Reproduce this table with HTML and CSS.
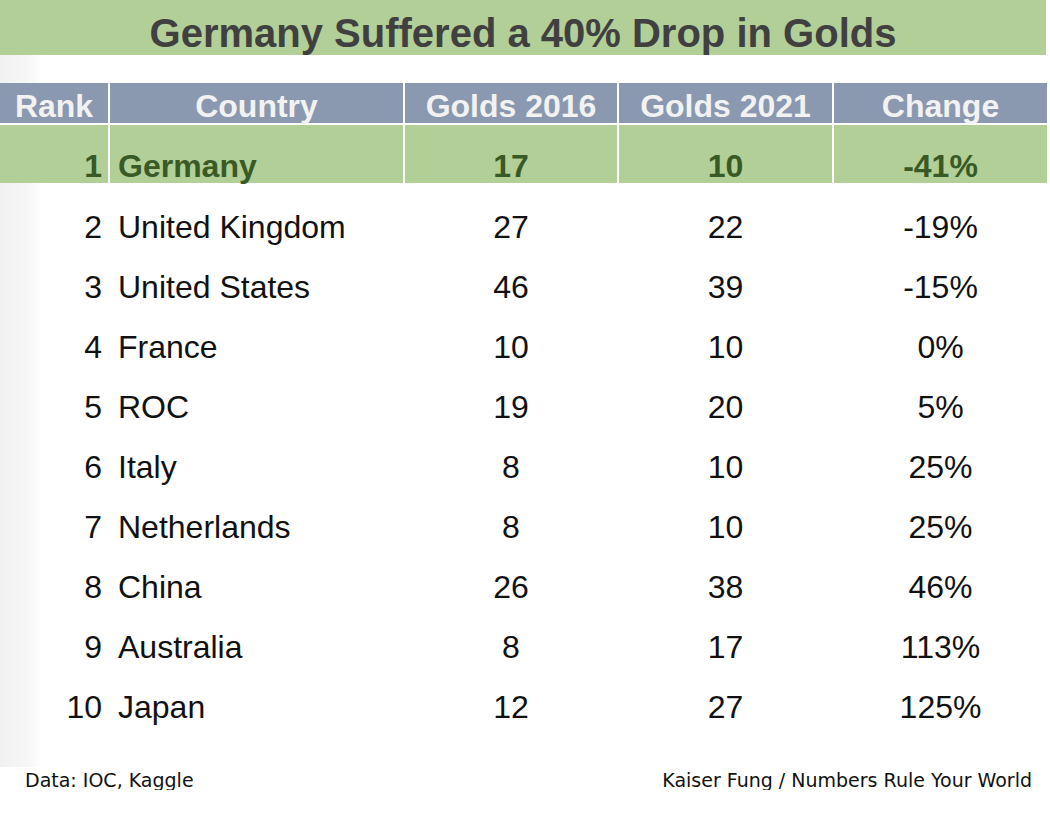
FILE: index.html
```
<!DOCTYPE html>
<html lang="en">
<head>
<meta charset="utf-8">
<title>Germany Suffered a 40% Drop in Golds</title>
<link rel="stylesheet" href="styles.css">
</head>
<body>
<div class="title">Germany Suffered a 40% Drop in Golds</div>
<div class="board">
  <table class="medals">
    <colgroup>
      <col class="c-rank"><col class="c-country"><col class="c-g16"><col class="c-g21"><col class="c-chg">
    </colgroup>
    <thead>
      <tr><th>Rank</th><th>Country</th><th>Golds 2016</th><th>Golds 2021</th><th>Change</th></tr>
    </thead>
    <tbody>
      <tr class="hl"><td class="rank">1</td><td class="country">Germany</td><td>17</td><td>10</td><td>-41%</td></tr>
      <tr><td class="rank">2</td><td class="country">United Kingdom</td><td>27</td><td>22</td><td>-19%</td></tr>
      <tr><td class="rank">3</td><td class="country">United States</td><td>46</td><td>39</td><td>-15%</td></tr>
      <tr><td class="rank">4</td><td class="country">France</td><td>10</td><td>10</td><td>0%</td></tr>
      <tr><td class="rank">5</td><td class="country">ROC</td><td>19</td><td>20</td><td>5%</td></tr>
      <tr><td class="rank">6</td><td class="country">Italy</td><td>8</td><td>10</td><td>25%</td></tr>
      <tr><td class="rank">7</td><td class="country">Netherlands</td><td>8</td><td>10</td><td>25%</td></tr>
      <tr><td class="rank">8</td><td class="country">China</td><td>26</td><td>38</td><td>46%</td></tr>
      <tr><td class="rank">9</td><td class="country">Australia</td><td>8</td><td>17</td><td>113%</td></tr>
      <tr><td class="rank">10</td><td class="country">Japan</td><td>12</td><td>27</td><td>125%</td></tr>
    </tbody>
  </table>
</div>
<div class="footer">
  <span>Data: IOC, Kaggle</span>
  <span>Kaiser Fung / Numbers Rule Your World</span>
</div>
</body>
</html>
```
FILE: styles.css
```
html, body {
  margin: 0;
  padding: 0;
  background: #ffffff;
}

body {
  font-family: "Liberation Sans", Arial, sans-serif;
  color: #111111;
  width: 1050px;
}

.title {
  box-sizing: border-box;
  width: 1046px;
  height: 55px;
  padding-top: 11px;
  line-height: 44px;
  background: #b2cf98;
  color: #404040;
  font-size: 40px;
  font-weight: bold;
  text-align: center;
}

.board {
  box-sizing: border-box;
  height: 712px;
  padding-top: 28px;
  background: linear-gradient(to right, #f1f1f1 0, #f7f7f7 28px, #ffffff 42px);
}

.medals {
  width: 1047px;
  table-layout: fixed;
  border-collapse: separate;
  border-spacing: 0;
  font-size: 32px;
  line-height: 32px;
}

.c-rank { width: 110px; }
.c-country { width: 295px; }
.c-g16 { width: 214px; }
.c-g21 { width: 215px; }
.c-chg { width: 213px; }

.medals th,
.medals td {
  box-sizing: border-box;
  padding: 0;
  vertical-align: bottom;
  text-align: center;
  white-space: nowrap;
  border-right: 2px solid #ffffff;
}

.medals th:last-child,
.medals td:last-child {
  border-right: 0;
}

.medals th {
  height: 42px;
  padding-bottom: 1px;
  background: #8a99b0;
  color: #f2f2f2;
  font-weight: bold;
  border-bottom: 2px solid #ffffff;
}

.medals td {
  height: 60px;
  border-right-color: transparent;
}

.medals td.rank {
  text-align: right;
  padding-right: 6px;
}

.medals td.country {
  text-align: left;
  padding-left: 8px;
}

.medals tr.hl td {
  height: 58px;
  padding-bottom: 1px;
  background: #b2cf98;
  color: #3a5a25;
  font-weight: bold;
  border-right-color: #ffffff;
}

.footer {
  display: flex;
  justify-content: space-between;
  margin-top: 3px;
  padding: 0 18px 0 25px;
  font-family: "DejaVu Sans", Verdana, sans-serif;
  font-size: 19px;
  line-height: 20px;
  color: #111111;
}
```
